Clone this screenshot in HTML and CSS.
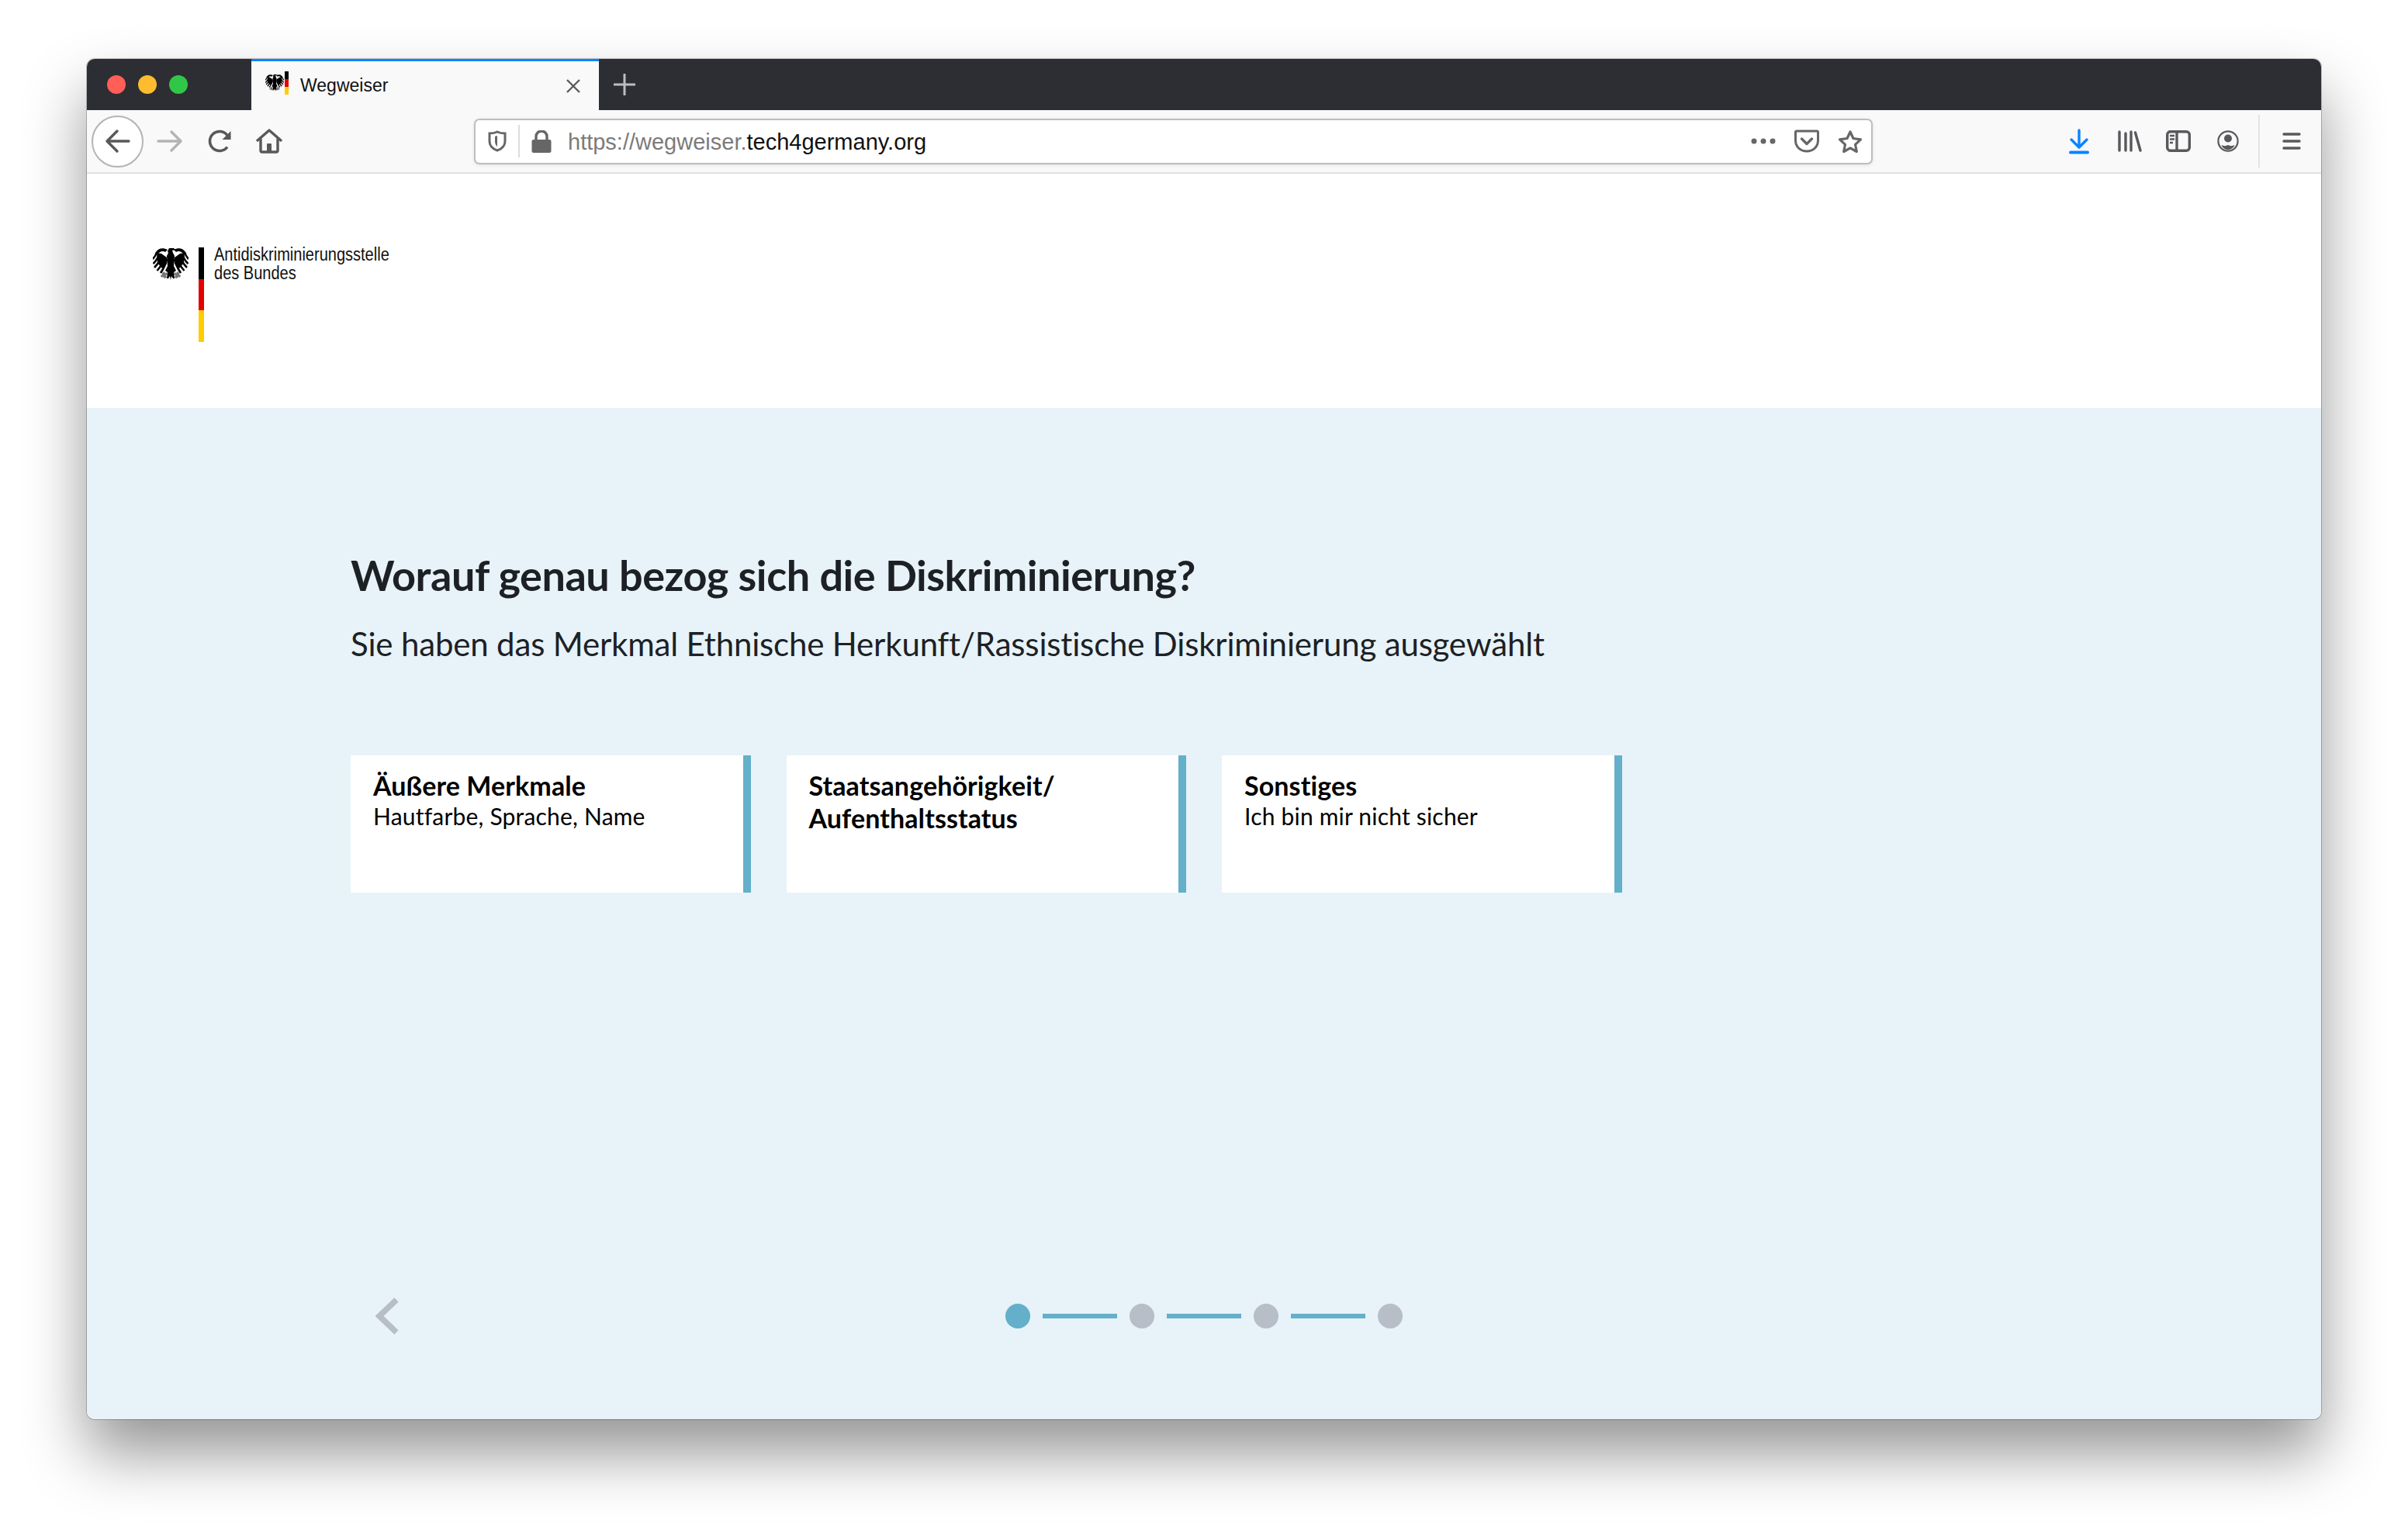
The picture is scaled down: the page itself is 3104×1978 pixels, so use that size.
FILE: index.html
```html
<!DOCTYPE html>
<html lang="de">
    <head>
        <meta charset="utf-8">
        <title>Wegweiser</title>
        <link rel="stylesheet" href="styles.css">
    </head>
    <body>
        <svg class="defs" width="0" height="0">
            <symbol id="eagle" viewBox="0 0 46 44">
                <g id="eagleWing">
                    <path d="M19 3C13 0 7 1 4 6l2 3c3-4 7-5 10-3z" fill="#000"/>
                    <path d="M5 7l6 1 7 5v8l-6 6-6-7z" fill="#000"/>
                    <g fill="none" stroke="#000" stroke-width="2.600">
                        <path d="M5 6C4 10 2 13 0 15"/>
                        <path d="M8 8C7.500 12 4 18 0.500 21"/>
                        <path d="M11 10C11 14 7 21 2 26"/>
                        <path d="M15 13C14 18 10 25 5.500 30"/>
                        <path d="M18 15C17 21 14 27 10 33"/>
                    </g>
                    <path d="M12 33l2-2 2 2 2-1 1 3-2 1 1 3-3 1-2-2-2 1-1-3 2-1z" fill="#777"/>
                </g>
                <use href="#eagleWing" transform="matrix(-1 0 0 1 46 0)"/>
                <path d="M19 5l2-4h6l2 2-4 1 1 3 2 4-1 13 3 6-3 2 1 8h-2l-2-3-1 5-1-5-2 3h-2l1-8-3-2 3-6-1-13 2-4z" fill="#000"/>
            </symbol>
        </svg>

        <div class="window">
            <div class="tabbar">
                <div class="lights">
                    <span class="light red"></span>
                    <span class="light yellow"></span>
                    <span class="light green"></span>
                </div>
                <div class="tab">
                    <div class="favicon">
                        <svg width="24" height="30"><use href="#eagle"/></svg>
                        <div class="flag small"><i></i><i></i><i></i></div>
                    </div>
                    <span class="tab-title">Wegweiser</span>
                    <svg class="tab-close" width="20" height="20" viewBox="0 0 20 20"><path d="M2 2l16 16M18 2L2 18" stroke="#5b5b5e" stroke-width="2.400" fill="none"/></svg>
                </div>
                <svg class="new-tab" width="28" height="28" viewBox="0 0 28 28"><path d="M14 1v26M1 14h26" stroke="#bdbdbf" stroke-width="3" stroke-linecap="round"/></svg>
            </div>

            <div class="toolbar">
                <div class="nav-buttons">
                    <div class="back">
                        <svg width="34" height="34" viewBox="0 0 34 34"><path d="M31 17H4M16 4L3 17l13 13" fill="none" stroke="#59595c" stroke-width="3.400" stroke-linecap="round" stroke-linejoin="round"/></svg>
                    </div>
                    <svg class="forward" width="34" height="30" viewBox="0 0 34 30"><path d="M2 15h28M19 3l12 12-12 12" fill="none" stroke="#b4b4b6" stroke-width="3.400" stroke-linecap="round" stroke-linejoin="round"/></svg>
                    <svg class="reload" width="32" height="30" viewBox="0 0 32 30"><path d="M25 22.500A12.500 12.500 0 1 1 25 7.500l3 3.500" fill="none" stroke="#59595c" stroke-width="3.600"/><path d="M29.500 2v11h-11z" fill="#59595c"/></svg>
                    <svg class="home" width="34" height="32" viewBox="0 0 34 32"><path d="M2 15L17 2l15 13M6 13v15a2 2 0 0 0 2 2h18a2 2 0 0 0 2-2V13" fill="none" stroke="#59595c" stroke-width="3.400" stroke-linecap="round" stroke-linejoin="round"/><path d="M14 30V20a1 1 0 0 1 1-1h4a1 1 0 0 1 1 1v10z" fill="#59595c"/></svg>
                </div>

                <div class="urlbar">
                    <svg class="shield" width="24" height="28" viewBox="0 0 24 28"><path d="M12 2c3 1.500 6 2 10 2v10c0 6-4 10-10 12C6 24 2 20 2 14V4c4 0 7-.500 10-2z" fill="none" stroke="#666" stroke-width="3"/><path d="M12 7v14c-2-1.500-3-4-3-7V8z" fill="#666"/></svg>
                    <span class="url-sep"></span>
                    <svg class="lock" width="26" height="29" viewBox="0 0 26 29"><path d="M6 13V8a7 7 0 0 1 14 0v5" fill="none" stroke="#666" stroke-width="3.400"/><rect x="0.500" y="12" width="25" height="17" rx="2.500" fill="#666"/></svg>
                    <span class="url"><span class="url-dim">https://wegweiser.</span>tech4germany.org</span>
                    <svg class="dots" width="32" height="8" viewBox="0 0 32 8"><circle cx="4" cy="4" r="3.500" fill="#666"/><circle cx="16" cy="4" r="3.500" fill="#666"/><circle cx="28" cy="4" r="3.500" fill="#666"/></svg>
                    <svg class="pocket" width="32" height="30" viewBox="0 0 32 30"><path d="M3 2h26a1.500 1.500 0 0 1 1.500 1.500V14c0 8-6 14-14.500 14S1.500 22 1.500 14V3.500A1.500 1.500 0 0 1 3 2z" fill="none" stroke="#666" stroke-width="3"/><path d="M9.500 12l6.500 6.500 6.500-6.500" fill="none" stroke="#666" stroke-width="3.400" stroke-linecap="round" stroke-linejoin="round"/></svg>
                    <svg class="star" width="32" height="31" viewBox="0 0 32 31"><path d="M16 3l4 8.500 9.500 1.300-7 6.500 1.800 9.200L16 23.800l-8.300 4.700 1.800-9.200-7-6.500 9.500-1.300z" fill="none" stroke="#666" stroke-width="3.200" stroke-linejoin="round"/></svg>
                </div>

                <div class="tools">
                    <svg class="download" width="26" height="33" viewBox="0 0 26 33"><path d="M13 2v21M3 14l10 10 10-10" fill="none" stroke="#0a84ff" stroke-width="3.400" stroke-linecap="round" stroke-linejoin="round"/><path d="M2 30.500h22" stroke="#0a84ff" stroke-width="4" stroke-linecap="round"/></svg>
                    <svg class="library" width="31" height="28" viewBox="0 0 31 28"><path d="M2 2v24M10 4v22M17 2v24M22.500 3L29 26" fill="none" stroke="#59595c" stroke-width="3.400" stroke-linecap="round"/></svg>
                    <svg class="sidebar" width="32" height="28" viewBox="0 0 32 28"><rect x="1.700" y="1.700" width="28.600" height="24.600" rx="4" fill="none" stroke="#59595c" stroke-width="3.400"/><path d="M14 2v24" stroke="#59595c" stroke-width="3.400"/><path d="M5 7h6M5 11.500h6M5 16h4" stroke="#59595c" stroke-width="2.400"/></svg>
                    <svg class="account" width="28" height="28" viewBox="0 0 28 28"><circle cx="14" cy="14" r="12.600" fill="none" stroke="#59595c" stroke-width="2.200"/><circle cx="14" cy="10.500" r="5" fill="#59595c"/><path d="M5.500 19c3 1.500 5.500 1.500 8.500 0 3 1.500 5.500 1.500 8.500 0-1.500 4-5 6-8.500 6s-7-2-8.500-6z" fill="#59595c"/></svg>
                    <span class="tool-sep"></span>
                    <svg class="menu" width="24" height="24" viewBox="0 0 24 24"><path d="M2 3h20M2 12h20M2 21h20" stroke="#59595c" stroke-width="3.400" stroke-linecap="round"/></svg>
                </div>
            </div>

            <header class="site-header">
                <div class="logo">
                    <svg class="logo-eagle" width="46" height="44"><use href="#eagle"/></svg>
                    <div class="flag"><i></i><i></i><i></i></div>
                    <div class="logo-text">Antidiskriminierungsstelle<br>des Bundes</div>
                </div>
            </header>

            <main class="content">
                <h1>Worauf genau bezog sich die Diskriminierung?</h1>
                <p class="lead">Sie haben das Merkmal Ethnische Herkunft/Rassistische Diskriminierung ausgewählt</p>

                <div class="cards">
                    <div class="card">
                        <h2>Äußere Merkmale</h2>
                        <p>Hautfarbe, Sprache, Name</p>
                    </div>
                    <div class="card">
                        <h2>Staatsangehörigkeit/<br>Aufenthaltsstatus</h2>
                    </div>
                    <div class="card">
                        <h2>Sonstiges</h2>
                        <p>Ich bin mir nicht sicher</p>
                    </div>
                </div>

                <div class="footer-nav">
                    <svg class="prev" width="30" height="48" viewBox="0 0 30 48"><path d="M27 3L5 24l22 21" fill="none" stroke="#b7bec7" stroke-width="7.500"/></svg>
                    <div class="stepper">
                        <span class="dot active"></span><span class="step-line"></span>
                        <span class="dot"></span><span class="step-line"></span>
                        <span class="dot"></span><span class="step-line"></span>
                        <span class="dot"></span>
                    </div>
                </div>
            </main>
        </div>
    </body>
</html>
```

FILE: styles.css
```css
* {
    padding: 0;
    margin: 0;
    box-sizing: border-box;
}

body {
    background: #fff;
    height: 1978px;
    overflow: hidden;
}

.defs {
    display: block;
}

.window {
    display: flex;
    flex-direction: column;
    width: 2880px;
    height: 1754px;
    margin: 76px 0 0 112px;
    border-radius: 10px;
    box-shadow: 0 0 0 1px rgba(0, 0, 0, 0.22), 0 44px 80px rgba(0, 0, 0, 0.42);
}

/* tab strip */
.tabbar {
    display: flex;
    align-items: stretch;
    height: 66px;
    background: #2d2e33;
    border-radius: 10px 10px 0 0;
}

.lights {
    display: flex;
    align-items: center;
    gap: 16px;
    width: 212px;
    padding-left: 26px;
}

.light {
    width: 24px;
    height: 24px;
    border-radius: 50%;
}

.red { background: #ff5f57; }
.yellow { background: #febc2e; }
.green { background: #30c748; }

.tab {
    display: flex;
    align-items: center;
    width: 448px;
    padding: 0 23px 0 18px;
    background: #f9f9fa;
    border-top: 3px solid #0a84ff;
    font-family: "Liberation Sans", sans-serif;
    font-size: 23px;
    color: #111;
}

.favicon {
    display: flex;
    align-items: center;
    gap: 1px;
    width: 45px;
    height: 32px;
    margin-top: -8px;
}

.tab-title {
    flex: 1;
}

.new-tab {
    align-self: center;
    margin-left: 19px;
}

.flag {
    display: flex;
    flex-direction: column;
    width: 7px;
    height: 122px;
}

.flag i {
    flex: 1;
}

.flag i:nth-child(1) { background: #000; }
.flag i:nth-child(2) { background: #e30000; }
.flag i:nth-child(3) { background: #ffcc00; }

.flag.small {
    width: 5px;
    height: 30px;
}

/* toolbar */
.toolbar {
    display: flex;
    align-items: center;
    height: 82px;
    padding-left: 6px;
    background: #f9f9fa;
    border-bottom: 2px solid #e1e1e2;
}

.nav-buttons {
    display: flex;
    align-items: center;
    width: 493px;
}

.back {
    display: flex;
    align-items: center;
    justify-content: center;
    width: 67px;
    height: 67px;
    background: #fff;
    border: 2px solid #b4b4b6;
    border-radius: 50%;
}

.forward { margin-left: 17px; }
.reload { margin-left: 32px; }
.home { margin-left: 30px; }

.urlbar {
    display: flex;
    align-items: center;
    width: 1803px;
    height: 59px;
    padding: 0 11px 0 16px;
    background: #fff;
    border: 2px solid #bebebe;
    border-radius: 7px;
    box-shadow: 0 1px 4px rgba(0, 0, 0, 0.1);
    font-family: "Liberation Sans", sans-serif;
    font-size: 29px;
    color: #111;
}

.url-sep {
    width: 2px;
    height: 42px;
    margin: 0 15px 0 15px;
    background: #dcdcdc;
}

.url {
    flex: 1;
    margin: 2px 0 0 21px;
}

.url-dim {
    color: #7b7b7b;
}

.pocket { margin-left: 24px; }
.star { margin-left: 24px; }

.tools {
    display: flex;
    align-items: center;
    height: 100%;
    margin-left: 253px;
}

.library { margin-left: 37px; }
.sidebar { margin-left: 31px; }
.account { margin-left: 34px; }

.tool-sep {
    width: 2px;
    height: 68px;
    margin: 0 29px 0 25px;
    background: #e3e3e4;
}

/* page */
.site-header {
    height: 302px;
    padding: 95px 0 0 85px;
    background: #fff;
}

.logo {
    display: flex;
    align-items: flex-start;
}

.logo-eagle {
    margin-right: 13px;
}

/* the logo lettering is condensed, none of the installed fonts is */
.logo-text {
    margin: -3px 0 0 13px;
    font-family: "Liberation Sans", sans-serif;
    font-size: 23px;
    line-height: 24px;
    color: #111;
    transform: scaleX(0.87);
    transform-origin: left top;
}

.content {
    display: flex;
    flex-direction: column;
    flex: 1;
    padding: 183px 0 0 340px;
    background: #e7f3f8;
    border-radius: 0 0 10px 10px;
    font-family: Lato, sans-serif;
}

h1 {
    font-size: 54px;
    line-height: 66px;
    font-weight: 700;
    letter-spacing: -0.45px;
    color: #1d2125;
}

.lead {
    margin-top: 30px;
    font-size: 42px;
    line-height: 50px;
    letter-spacing: -0.17px;
    color: #1d2125;
}

.cards {
    display: flex;
    gap: 46px;
    margin-top: 119px;
}

.card {
    width: 515.500px;
    height: 177px;
    padding: 18px 20px 0 29px;
    background: #fff;
    border-right: 10px solid #64afc9;
    color: #000;
}

.card h2 {
    font-size: 34px;
    line-height: 42px;
    font-weight: 700;
    letter-spacing: 0.1px;
}

.card p {
    font-size: 30px;
    line-height: 36px;
    letter-spacing: 0.2px;
}

.footer-nav {
    display: flex;
    align-items: center;
    margin-top: 522px;
    padding-left: 32px;
}

.stepper {
    display: flex;
    align-items: center;
    margin-left: 782px;
}

.dot {
    width: 32px;
    height: 32px;
    background: #b7bec7;
    border-radius: 50%;
}

.dot.active {
    background: #64afc9;
}

.step-line {
    width: 96px;
    height: 6px;
    margin: 0 16px;
    background: #64afc9;
}
```
